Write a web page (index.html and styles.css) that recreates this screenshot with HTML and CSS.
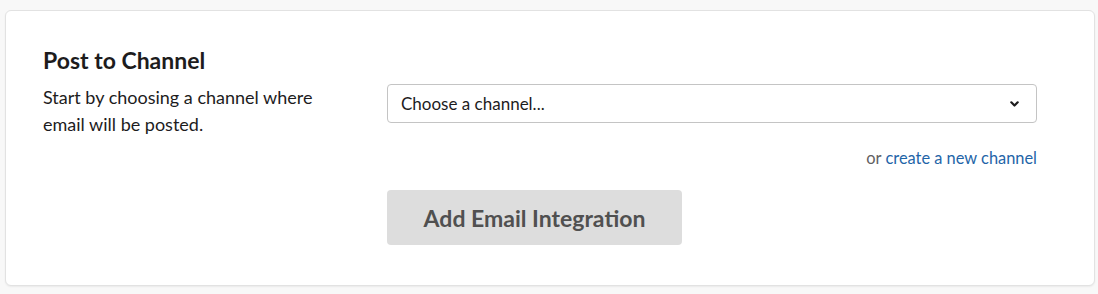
FILE: index.html
```html
<!DOCTYPE html>
<html lang="en">
<head>
    <meta charset="UTF-8">
    <meta name="viewport" content="width=device-width, initial-scale=1.0">
    <title>Email Integration</title>
    <link rel="stylesheet" href="styles.css">
</head>
<body>
    <div class="card">
        <h2 class="section-title">Post to Channel</h2>
        <div class="form-row">
            <p class="help-text">Start by choosing a channel where email will be posted.</p>
            <div class="field-column">
                <div class="select-box">
                    <span class="select-value">Choose a channel...</span>
                    <svg class="chevron" width="9" height="6" viewBox="0 0 9 6">
                        <path d="M1.3 1.3 L4.5 4.5 L7.7 1.3" fill="none" stroke="#1d1c1d" stroke-width="2.2" stroke-linecap="round" stroke-linejoin="round"/>
                    </svg>
                </div>
                <div class="new-channel">or <a href="#" class="link">create a new channel</a></div>
                <button class="submit-btn" disabled>Add Email Integration</button>
            </div>
        </div>
    </div>
</body>
</html>
```

FILE: styles.css
```css
        body {
            margin: 0;
            padding: 10px 3px 8px 5px;
            background-color: #f8f8f8;
            font-family: Lato, "Open Sans", sans-serif;
            color: #1d1c1d;
        }
        .card {
            background-color: #fff;
            border: 1px solid #e2e2e2;
            border-radius: 6px;
            box-shadow: 0 1px 2px rgba(0, 0, 0, 0.06);
            padding: 35px 57px 40px 37px;
        }
        .section-title {
            font-size: 23px;
            font-weight: 700;
            line-height: 28px;
            margin: 0 0 10px 0;
        }
        .form-row {
            display: flex;
            gap: 44px;
        }
        .help-text {
            width: 300px;
            flex-shrink: 0;
            margin: 0;
            font-size: 18px;
            line-height: 27px;
        }
        .field-column {
            flex-grow: 1;
        }
        .select-box {
            display: flex;
            align-items: center;
            justify-content: space-between;
            height: 39px;
            box-sizing: border-box;
            border: 1px solid #c4c4c4;
            border-radius: 4px;
            padding: 0 17px 0 13px;
            font-size: 17px;
        }
        .chevron {
            display: block;
        }
        .new-channel {
            text-align: right;
            font-size: 16.4px;
            color: #616061;
            margin-top: 24px;
            line-height: 22px;
        }
        .link {
            color: #1f65a8;
            text-decoration: none;
        }
        .submit-btn {
            display: block;
            margin-top: 21px;
            width: 295px;
            height: 55px;
            border: none;
            border-radius: 4px;
            background-color: #dddddd;
            color: #505050;
            font-family: Lato, "Open Sans", sans-serif;
            font-size: 23px;
            font-weight: 700;
        }
```
